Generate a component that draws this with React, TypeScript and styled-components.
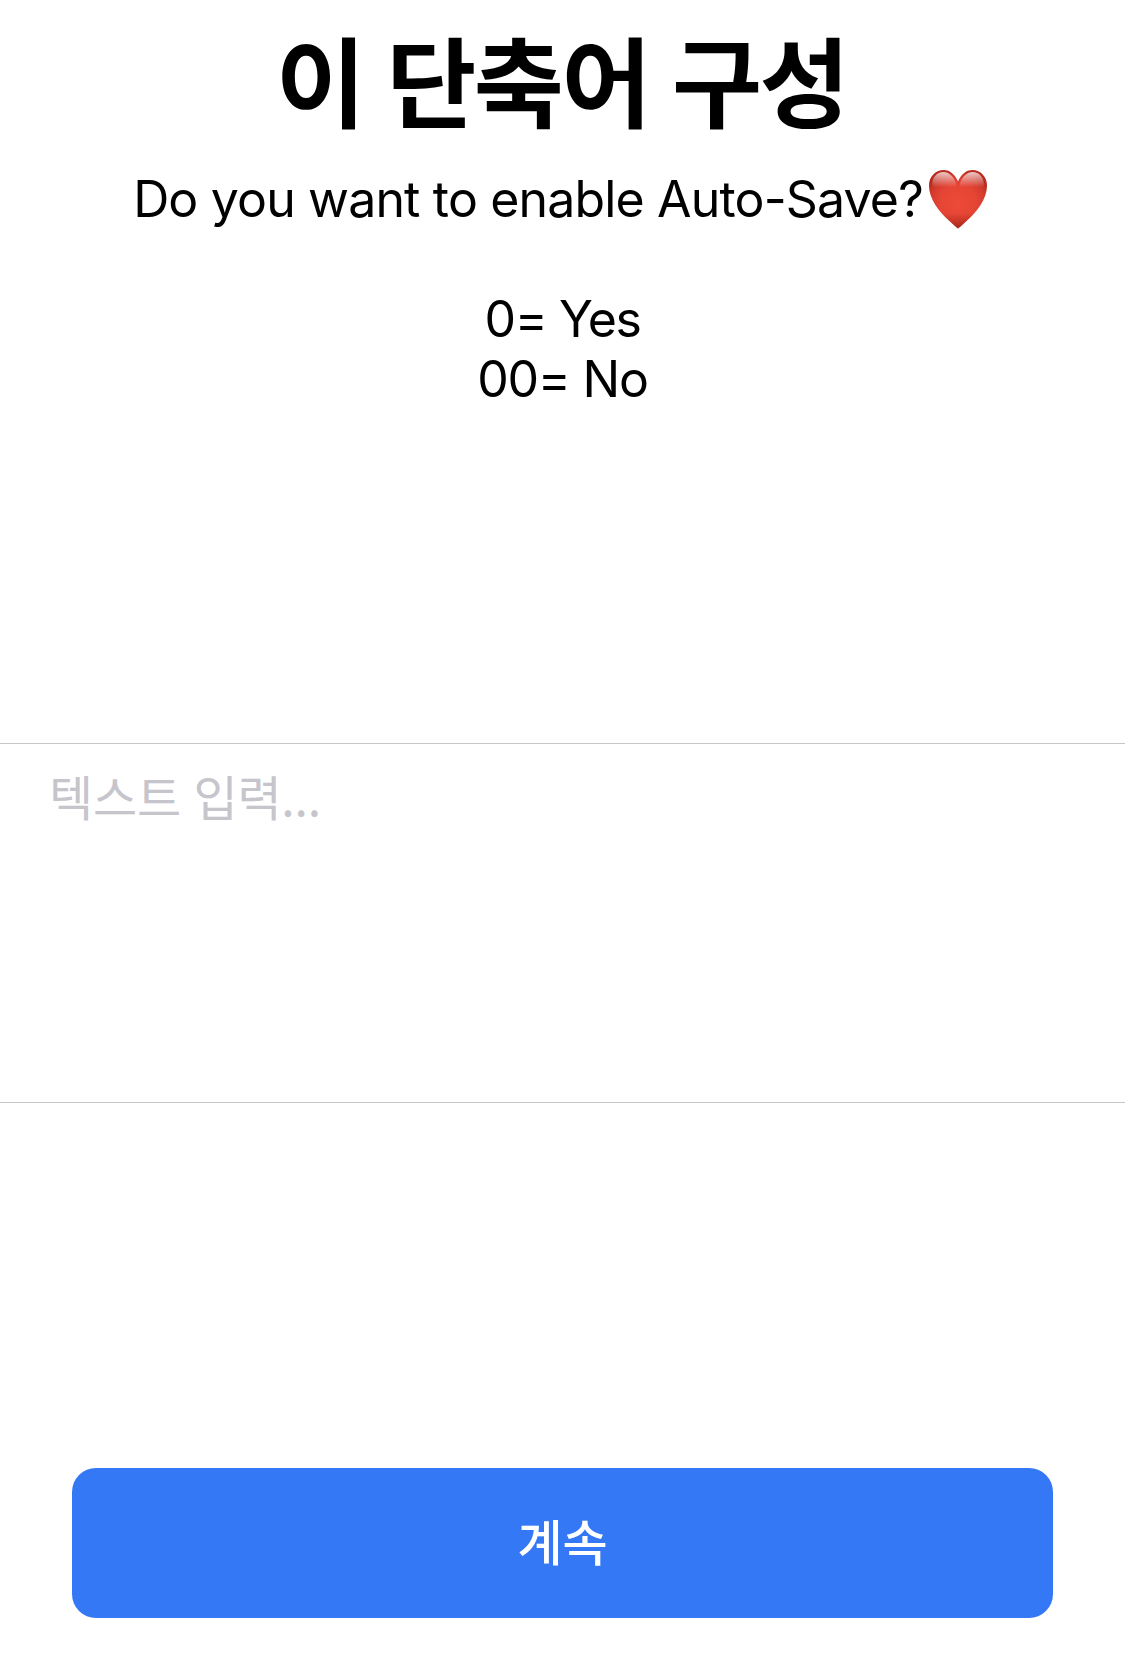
import React from "react";
import styled, { createGlobalStyle } from "styled-components";

const Global = createGlobalStyle`
  * { box-sizing: border-box; }
  body { margin: 0; background: #fff; color: #000; }
`;
const Screen = styled.main`
  display: flex;
  flex-direction: column;
  width: 100%;
  height: 1654px;
  overflow: hidden;
  font-family: Inter, "Noto Sans CJK KR", sans-serif;
`;
const Header = styled.header`
  height: 743px;
  padding-top: 15px;
  text-align: center;
`;
const Title = styled.h1`
  margin: 0;
  padding-right: 2px;
  font: 700 98px/124px "Noto Sans CJK KR", sans-serif;
  letter-spacing: -2.5px;
  word-spacing: 3px;
`;
const Prompt = styled.div`
  padding-top: 30px;
`;
const Line = styled.p<{ $tracking?: number }>`
  margin: 0;
  min-height: 60px;
  display: flex;
  justify-content: center;
  align-items: center;
  font-size: 50px;
  line-height: 60px;
  letter-spacing: ${(p) => p.$tracking ?? -0.84}px;
`;
const Input = styled.textarea`
  display: block;
  width: 100%;
  height: 360px;
  padding: 21px 49px;
  border: solid #c6c6c8;
  border-width: 1px 0;
  border-radius: 0;
  outline: 0;
  resize: none;
  background: #fff;
  font: 400 48px/60px "Noto Sans CJK KR", sans-serif;
  letter-spacing: -0.2px;
  word-spacing: 2px;
  &::placeholder { color: #c6c5cb; opacity: 1; }
`;
const Footer = styled.footer`
  margin-top: auto;
  padding: 0 72px 36px;
`;
const Button = styled.button`
  width: 100%;
  height: 150px;
  padding: 0 0 6px;
  border: 0;
  border-radius: 24px;
  background: #3478f6;
  color: #fff;
  font: 500 49px/60px "Noto Sans CJK KR", sans-serif;
`;
const HeartIcon = styled.svg`
  width: 60px;
  height: 60px;
  margin: 0 4px 0 5px;
`;
const heartShape =
  "M30 59.500C28.500 58.500 26 56 22 52.500C11 43 1 30 1 16.500C1 7.500 7.500 1 15.500 1C22 1 27 5.500 30 12.500C33 5.500 38 1 44.500 1C52.500 1 59 7.500 59 16.500C59 30 49 43 38 52.500C34 56 31.500 58.500 30 59.500Z";

function Heart() {
  return (
    <HeartIcon viewBox="0 0 60 60" aria-label="heart">
      <defs>
        <radialGradient id="body" cx="30" cy="34" r="33" gradientUnits="userSpaceOnUse">
          <stop offset="0" stopColor="#ee4a38" />
          <stop offset="0.55" stopColor="#e54535" />
          <stop offset="0.85" stopColor="#d23a2c" />
          <stop offset="1" stopColor="#b92b1f" />
        </radialGradient>
        <linearGradient id="tip" x1="0" y1="44" x2="0" y2="60" gradientUnits="userSpaceOnUse">
          <stop offset="0" stopColor="#8f1c12" stopOpacity="0" />
          <stop offset="1" stopColor="#8f1c12" stopOpacity="0.7" />
        </linearGradient>
        <linearGradient id="gloss" x1="0" y1="3" x2="0" y2="18" gradientUnits="userSpaceOnUse">
          <stop offset="0" stopColor="#fff" stopOpacity="0.75" />
          <stop offset="1" stopColor="#fff" stopOpacity="0" />
        </linearGradient>
      </defs>
      <path d={heartShape} fill="url(#body)" />
      <path d={heartShape} fill="url(#tip)" />
      <path d="M4 17C4 8 9 3 15.500 3C21 3 25 7 28 14V18H4Z" fill="url(#gloss)" />
      <path d="M56 17C56 8 51 3 44.500 3C39 3 35 7 32 14V18H56Z" fill="url(#gloss)" />
    </HeartIcon>
  );
}

export default function App() {
  return (
    <Screen>
      <Global />
      <Header>
        <Title>이 단축어 구성</Title>
        <Prompt>
          <Line>Do you want to enable Auto-Save?<Heart /></Line>
          <Line />
          <Line $tracking={-1.4}>0= Yes</Line>
          <Line $tracking={-1.2}>00= No</Line>
        </Prompt>
      </Header>
      <Input placeholder="텍스트 입력..." />
      <Footer><Button>계속</Button></Footer>
    </Screen>
  );
}
